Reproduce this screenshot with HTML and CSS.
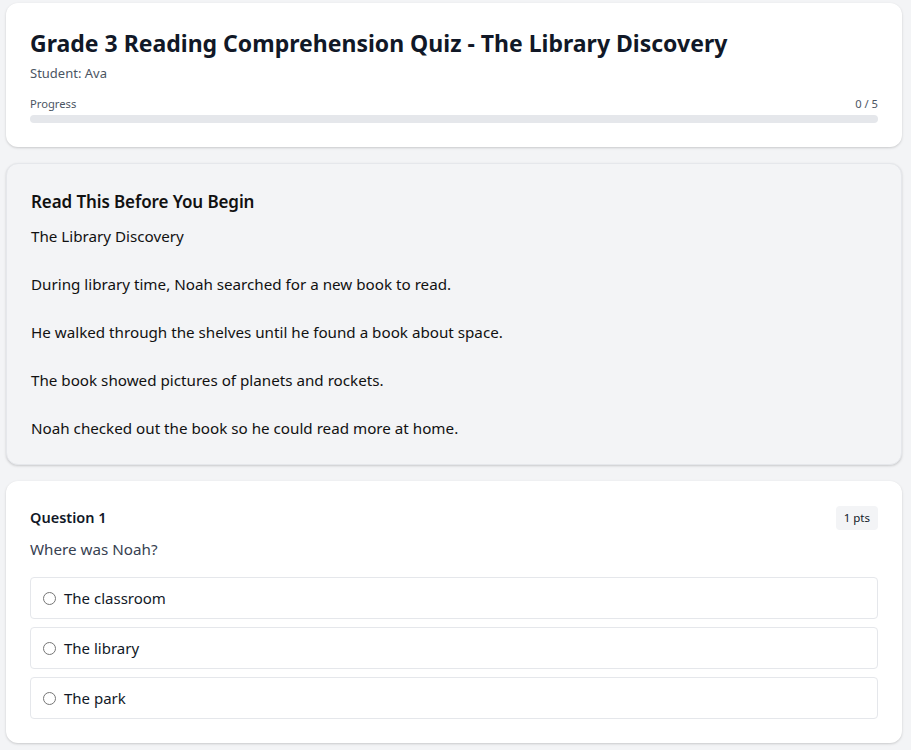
FILE: index.html
```html
<!DOCTYPE html>
<html lang="en">
<head>
<meta charset="utf-8">
<title>Grade 3 Reading Comprehension Quiz</title>
<link rel="stylesheet" href="styles.css">
</head>
<body>
<div class="page">
  <section class="card header-card">
    <h1 class="title">Grade 3 Reading Comprehension Quiz - The Library Discovery</h1>
    <div class="student">Student: Ava</div>
    <div class="progress-row">
      <span>Progress</span>
      <span>0 / 5</span>
    </div>
    <div class="progress-track"><div class="progress-fill"></div></div>
  </section>

  <section class="card passage-card">
    <h2 class="passage-title">Read This Before You Begin</h2>
    <div class="passage">The Library Discovery

During library time, Noah searched for a new book to read.

He walked through the shelves until he found a book about space.

The book showed pictures of planets and rockets.

Noah checked out the book so he could read more at home.</div>
  </section>

  <section class="card question-card">
    <div class="question-head">
      <h3 class="question-label">Question 1</h3>
      <span class="pts">1 pts</span>
    </div>
    <p class="question-text">Where was Noah?</p>
    <div class="options">
      <label class="option"><input type="radio" name="q1"><span>The classroom</span></label>
      <label class="option"><input type="radio" name="q1"><span>The library</span></label>
      <label class="option"><input type="radio" name="q1"><span>The park</span></label>
    </div>
  </section>
</div>
</body>
</html>
```

FILE: styles.css
```css
* { box-sizing: border-box; }
html, body { margin: 0; padding: 0; }
body {
  background: #f3f4f6;
  font-family: "Noto Sans", "Open Sans", "Liberation Sans", sans-serif;
  color: #111827;
}
.page {
  padding: 3px 9px 16px 6px;
  display: flex;
  flex-direction: column;
  gap: 16px;
}
.card {
  background: #ffffff;
  border-radius: 12px;
  box-shadow: 0 1px 3px rgba(0,0,0,0.12), 0 1px 2px rgba(0,0,0,0.06);
  padding: 24px;
}
.title {
  margin: 0;
  font-size: 23px;
  line-height: 32px;
  font-weight: 700;
  letter-spacing: 0;
  color: #111827;
}
.student {
  margin-top: 4px;
  font-size: 13px;
  line-height: 20px;
  color: #4b5563;
}
.progress-row {
  margin-top: 13px;
  display: flex;
  justify-content: space-between;
  font-size: 11.2px;
  line-height: 16px;
  color: #4b5563;
}
.progress-track {
  margin-top: 3px;
  height: 8px;
  border-radius: 4px;
  background: #e5e7eb;
  overflow: hidden;
}
.progress-fill { width: 0; height: 100%; background: #3b82f6; }

.passage-card {
  background: #f3f4f6;
  border: 1px solid #e5e7eb;
  padding: 24px;
}
.passage-title {
  margin: 0;
  font-size: 17px;
  line-height: 28px;
  font-weight: 600;
  letter-spacing: -0.1px;
  color: #111111;
}
.passage {
  margin-top: 8px;
  white-space: pre-wrap;
  font-size: 15.2px;
  line-height: 24px;
  color: #111111;
}

.question-head {
  display: flex;
  justify-content: space-between;
  align-items: flex-start;
}
.question-label {
  margin: 0;
  font-size: 14.5px;
  line-height: 24px;
  font-weight: 600;
  color: #111827;
}
.pts {
  font-size: 11.5px;
  line-height: 16px;
  padding: 4px 8px;
  border-radius: 4px;
  background: #f3f4f6;
  color: #111827;
  margin-top: 1px;
}
.question-text {
  margin: 7px 0 0;
  font-size: 15.2px;
  line-height: 24px;
  color: #374151;
}
.options {
  margin-top: 16px;
  display: flex;
  flex-direction: column;
  gap: 8px;
}
.option {
  display: flex;
  align-items: center;
  padding: 8px 12px;
  border: 1px solid #e5e7eb;
  border-radius: 4px;
  font-size: 15px;
  line-height: 24px;
  color: #111827;
}
.option input {
  margin: 0 8px 0 0;
  width: 13px;
  height: 13px;
}
```
